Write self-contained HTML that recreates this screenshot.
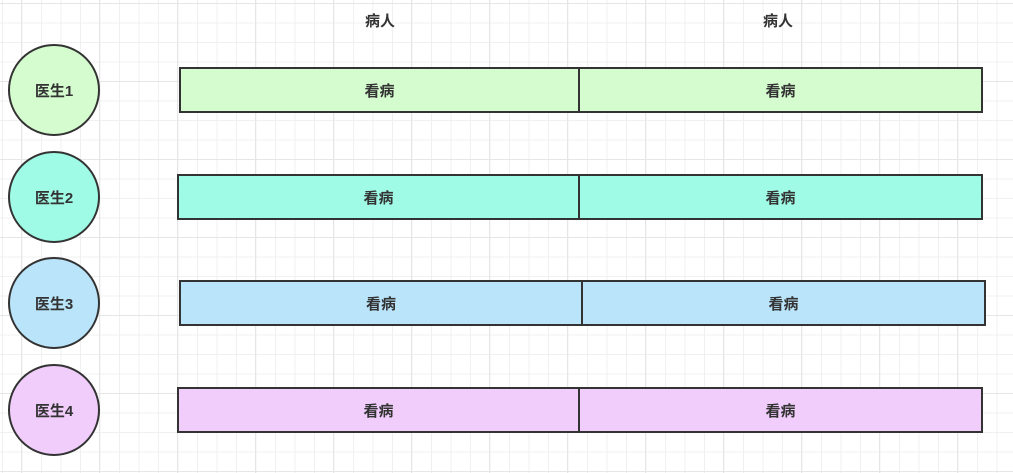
<!DOCTYPE html>
<html><head><meta charset="utf-8"><style>
body{margin:0;width:1013px;height:473px;overflow:hidden;background:#fff;
background-image:linear-gradient(#e6e6e6 1px,transparent 1px),linear-gradient(90deg,#e6e6e6 1px,transparent 1px),linear-gradient(#f0f0f0 1px,transparent 1px),linear-gradient(90deg,#f0f0f0 1px,transparent 1px);
background-size:78px 78px,78px 78px,19.5px 19.5px,19.5px 19.5px;background-position:21px 3px,21px 3px,2px 3px,2px 3px;
font-family:"Liberation Sans","Noto Sans CJK SC",sans-serif;font-weight:bold;color:#333;font-size:15px;position:relative}
.c{position:absolute;width:92px;height:92px;border:2px solid #333;border-radius:50%;display:flex;align-items:center;justify-content:center;box-sizing:border-box}
.r{position:absolute;height:46px;border:2px solid #333;box-sizing:border-box;display:flex}
.r div{flex:1;display:flex;align-items:center;justify-content:center}
.r div:first-child{border-right:2px solid #333}
.t{position:absolute;top:10px}
</style></head><body>
<div class="t" style="left:365px">病人</div>
<div class="t" style="left:763px">病人</div>
<div class="c" style="left:8px;top:44px;background:#d5fccf">医生1</div>
<div class="c" style="left:8px;top:151px;background:#9ffbe6">医生2</div>
<div class="c" style="left:8px;top:257px;background:#b9e4fa">医生3</div>
<div class="c" style="left:8px;top:364px;background:#f0cdfb">医生4</div>
<div class="r" style="left:179px;top:67px;width:804px;background:#d5fccf"><div style="flex:0 0 397px">看病</div><div>看病</div></div>
<div class="r" style="left:177px;top:174px;width:806px;background:#9ffbe6"><div style="flex:0 0 399px">看病</div><div>看病</div></div>
<div class="r" style="left:179px;top:280px;width:807px;background:#b9e4fa"><div style="flex:0 0 400px">看病</div><div>看病</div></div>
<div class="r" style="left:177px;top:387px;width:806px;background:#f0cdfb"><div style="flex:0 0 399px">看病</div><div>看病</div></div>
</body></html>
